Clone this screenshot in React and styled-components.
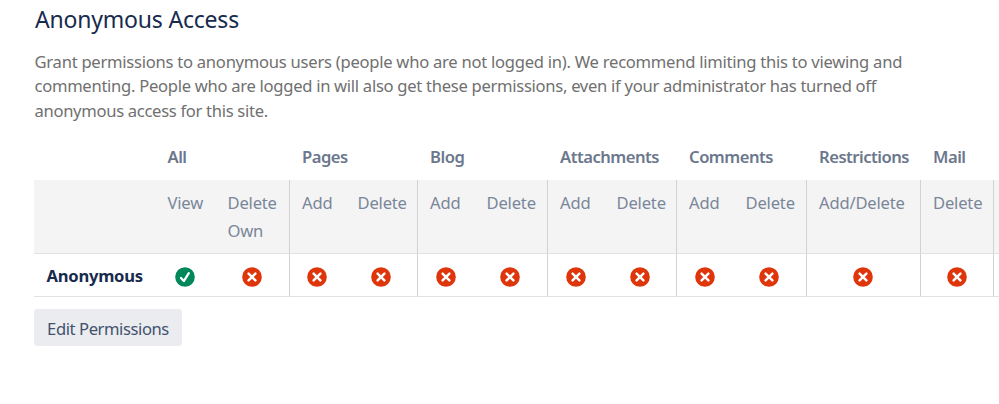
import React from 'react'
import styled, { createGlobalStyle } from 'styled-components'

const GlobalStyle = createGlobalStyle`
body {
  margin: 0;
  background: #ffffff;
  overflow: hidden;
}
`;

const Page = styled.div`
  box-sizing: border-box;
  width: 999px;
  height: 404px;
  padding: 5px 0 0 34px;
  overflow: hidden;
  background: #ffffff;
  font-family: 'Segoe UI', 'Noto Sans', 'Open Sans', sans-serif;
  font-size: 16.6px;
  color: #172b4d;
`;

const Title = styled.h2`
  margin: 0 0 0 1px;
  font-size: 23px;
  line-height: 29px;
  font-weight: 400;
  letter-spacing: -0.2px;
`;

const Description = styled.p`
  margin: 16px 0 0 0.5px;
  color: #707070;
  line-height: 24.4px;
`;

const Line = styled.span`
  display: block;
  white-space: nowrap;
  letter-spacing: ${({ spacing }) => spacing || '0'};
`;

const Table = styled.table`
  width: 1100px;
  margin-top: 11px;
  table-layout: fixed;
  border-collapse: separate;
  border-spacing: 0;
`;

const Cell = styled.td`
  box-sizing: border-box;
  padding: 0 0 0 ${({ divider }) => (divider ? '12px' : '12.5px')};
  border-left: ${({ divider }) => (divider ? '1px solid #d2d2d4' : '0')};
  text-align: left;
  white-space: nowrap;
`;

const GroupHead = styled(Cell).attrs({ as: 'th' })`
  height: 46px;
  padding-bottom: 2px;
  border-left-color: transparent;
  color: #6b778c;
  font-weight: 600;
  letter-spacing: -0.5px;
`;

const ActionHead = styled(Cell).attrs({ as: 'th' })`
  height: 74px;
  padding-top: 9px;
  border-bottom: 1px solid #e2e2e3;
  background: #f4f4f4;
  color: #7a869a;
  font-weight: 400;
  line-height: 28px;
  vertical-align: top;
`;

const NameCell = styled(Cell)`
  height: 43px;
  border-bottom: 1px solid #e2e2e3;
  font-weight: 700;
  letter-spacing: -0.25px;
`;

const StatusCell = styled(Cell)`
  height: 43px;
  padding: 4px 1px 0 0;
  border-bottom: 1px solid #e2e2e3;
  text-align: center;
`;

const StatusIcon = styled.svg`
  display: block;
  width: 20px;
  height: 20px;
  margin: 0 auto;
`;

const EditButton = styled.button`
  display: flex;
  align-items: center;
  justify-content: center;
  width: 148px;
  height: 37px;
  margin-top: 12px;
  padding: 2px 0 0;
  border: 0;
  border-radius: 3px;
  background: #ebecf0;
  color: #42526e;
  font: inherit;
  letter-spacing: -0.42px;
  white-space: nowrap;
`;

const groups = [
  { name: 'All', actions: [{ label: 'View', width: 60, allowed: true }, { label: 'Delete Own', width: 74 }] },
  { name: 'Pages', actions: [{ label: 'Add', width: 56 }, { label: 'Delete', width: 72 }] },
  { name: 'Blog', actions: [{ label: 'Add', width: 57 }, { label: 'Delete', width: 73 }] },
  { name: 'Attachments', actions: [{ label: 'Add', width: 57 }, { label: 'Delete', width: 72 }] },
  { name: 'Comments', actions: [{ label: 'Add', width: 57 }, { label: 'Delete', width: 73 }] },
  { name: 'Restrictions', actions: [{ label: 'Add/Delete', width: 114 }] },
  { name: 'Mail', actions: [{ label: 'Delete', width: 73 }] },
]

const Status = ({ allowed }) => (
  <StatusIcon viewBox="0 0 20 20" fill="none" stroke="#ffffff">
    <circle cx="10" cy="10" r="9.8" fill={allowed ? '#00875a' : '#de350b'} stroke="none" />
    {allowed
      ? <path d="M6 10.9l2.8 3.2 5-7.9" strokeWidth="2.3" strokeLinecap="round" strokeLinejoin="round" />
      : <path d="M6.6 6.6l6.8 6.8M13.4 6.6l-6.8 6.8" strokeWidth="2.5" strokeLinecap="round" />}
  </StatusIcon>
)

// every group but the first opens with a vertical rule
const columns = groups.flatMap((group, g) =>
  group.actions.map((action, i) => ({ ...action, divider: g > 0 && i === 0, id: group.name + i }))
)

const App = () => {
  return (
    <>
      <GlobalStyle />
      <Page>
        <Title>Anonymous Access</Title>
        <Description>
          <Line spacing="-0.26px">Grant permissions to anonymous users (people who are not logged in). We recommend limiting this to viewing and</Line>
          <Line spacing="-0.29px">commenting. People who are logged in will also get these permissions, even if your administrator has turned off</Line>
          <Line spacing="-0.31px">anonymous access for this site.</Line>
        </Description>
        <Table>
          <colgroup>
            <col style={{ width: 121 }} />
            {columns.map((col) => <col key={col.id} style={{ width: col.width }} />)}
            <col />
          </colgroup>
          <thead>
            <tr>
              <GroupHead />
              {groups.map((group, g) => (
                <GroupHead key={group.name} colSpan={group.actions.length} divider={g > 0}>{group.name}</GroupHead>
              ))}
              <GroupHead divider />
            </tr>
            <tr>
              <ActionHead />
              {columns.map((col) => (
                <ActionHead key={col.id} divider={col.divider}>
                  {col.label.split(' ').map((word) => <Line key={word} spacing="-0.2px">{word}</Line>)}
                </ActionHead>
              ))}
              <ActionHead divider />
            </tr>
          </thead>
          <tbody>
            <tr>
              <NameCell>Anonymous</NameCell>
              {columns.map((col) => (
                <StatusCell key={col.id} divider={col.divider}>
                  <Status allowed={col.allowed} />
                </StatusCell>
              ))}
              <StatusCell divider />
            </tr>
          </tbody>
        </Table>
        <EditButton>Edit Permissions</EditButton>
      </Page>
    </>
  )
}

export default App
